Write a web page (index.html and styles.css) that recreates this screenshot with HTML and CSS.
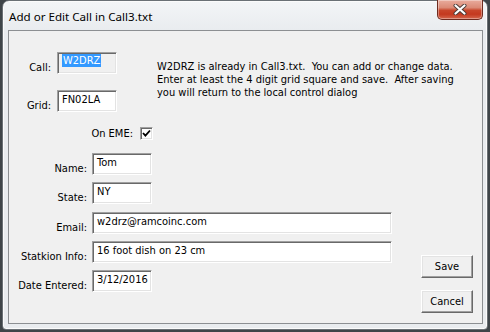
FILE: index.html
```html
<!DOCTYPE html>
<html>
<head>
<meta charset="utf-8">
<link rel="stylesheet" href="styles.css">
</head>
<body>
<div class="window">
  <div class="titlebar">
    <span class="title">Add or Edit Call in Call3.txt</span>
    <div class="close">
      <svg width="14" height="11" viewBox="0 0 14 11"><path d="M2.5 1.5 L11.5 9.5 M11.5 1.5 L2.5 9.5" stroke="#4a3a36" stroke-width="4" stroke-linecap="round"/><path d="M2.5 1.5 L11.5 9.5 M11.5 1.5 L2.5 9.5" stroke="#ffffff" stroke-width="2.2" stroke-linecap="round"/></svg>
    </div>
  </div>
  <div class="client">
    <div class="form">
      <div class="top">
        <div class="top-fields">
          <div class="row"><span class="lbl lbl-s">Call:</span><div class="tb tb-s disabled"><span class="sel">W2DRZ</span></div></div>
          <div class="row row-grid"><span class="lbl lbl-s">Grid:</span><div class="tb tb-s">FN02LA</div></div>
        </div>
        <p class="note">W2DRZ is already in Call3.txt.&nbsp; You can add or change data.<br>Enter at least the 4 digit grid square and save.&nbsp; After saving<br>you will return to the local control dialog</p>
      </div>
      <div class="eme"><span class="lbl lbl-eme">On EME:</span><span class="check"><svg width="9" height="9" viewBox="0 0 9 9"><path d="M1 4 L3.4 6.6 L8 1.5" fill="none" stroke="#000" stroke-width="1.8"/></svg></span></div>
      <div class="row row-l first"><span class="lbl">Name:</span><div class="tb tb-s">Tom</div></div>
      <div class="row row-l"><span class="lbl">State:</span><div class="tb tb-s">NY</div></div>
      <div class="row row-l"><span class="lbl">Email:</span><div class="tb tb-w">w2drz@ramcoinc.com</div></div>
      <div class="row row-l"><span class="lbl">Statkion Info:</span><div class="tb tb-w">16 foot dish on 23 cm</div></div>
      <div class="row row-l"><span class="lbl">Date Entered:</span><div class="tb tb-s">3/12/2016</div></div>
    </div>
    <div class="buttons">
      <button class="btn">Save</button>
      <button class="btn">Cancel</button>
    </div>
  </div>
</div>
</body>
</html>
```

FILE: styles.css
```css
html, body {
  margin: 0;
  padding: 0;
}
body {
  background: #3f4549;
  width: 490px;
  height: 332px;
  overflow: hidden;
  font-family: "DejaVu Sans Condensed", "Liberation Sans", sans-serif;
  font-size: 11px;
  color: #000;
}
.window {
  margin-left: 2px;
  width: 486px;
  height: 330px;
  box-sizing: border-box;
  border: 1px solid #6a7075;
  border-radius: 7px 7px 4px 4px;
  background: linear-gradient(to bottom, #f3f5f7 0, #e9ecef 29px, #e9ecef 100%);
  box-shadow: inset 0 0 0 1px #fbfbfb;
  padding: 0 4px 5px 5px;
  display: flex;
  flex-direction: column;
}
.titlebar {
  height: 29px;
  display: flex;
  align-items: flex-start;
  justify-content: space-between;
}
.title {
  font-family: "Noto Sans", "Open Sans", sans-serif;
  font-size: 11.6px;
  line-height: 16px;
  padding: 8px 0 0 1px;
  color: #000;
}
.close {
  margin-top: -1px;
  width: 46px;
  height: 20px;
  box-sizing: border-box;
  border: 1px solid #6e2b1f;
  border-top: none;
  border-radius: 0 0 5px 5px;
  background: linear-gradient(to bottom, #e9ac9d 0%, #db8a76 40%, #c8452a 55%, #c4391f 75%, #d4664c 100%);
  box-shadow: inset 0 0 0 1px rgba(255,255,255,0.35);
  display: flex;
  align-items: center;
  justify-content: center;
}
.client {
  flex: 1;
  min-height: 0;
  border: 1px solid #8c8f92;
  background: #f0f0f0;
  display: flex;
}
.form {
  flex: 1;
  min-width: 0;
  padding-top: 21px;
  display: flex;
  flex-direction: column;
}
.top {
  display: flex;
}
.top-fields {
  display: flex;
  flex-direction: column;
  flex-shrink: 0;
}
.row {
  display: flex;
  align-items: flex-end;
}
.row-grid {
  margin-top: 16px;
}
.lbl {
  flex-shrink: 0;
  line-height: 13px;
  text-align: right;
  width: 78px;
  margin-right: 5px;
  white-space: nowrap;
}
.lbl-s {
  width: 42px;
  margin-right: 6px;
}
.tb {
  flex-shrink: 0;
  height: 22px;
  box-sizing: border-box;
  background: #fff;
  border-style: solid;
  border-width: 1px;
  border-color: #a0a0a0 #ffffff #ffffff #a0a0a0;
  box-shadow: inset 1px 1px 0 #696969, inset -1px -1px 0 #e3e3e3;
  padding: 2px 3px 0 4px;
  line-height: 13px;
  white-space: nowrap;
  overflow: hidden;
}
.tb-s {
  width: 60px;
}
.tb-w {
  width: 300px;
}
.disabled {
  background: #f0f0f0;
  padding-top: 1px;
}
.sel {
  background: #3399ff;
  color: #fff;
  padding: 0 1px;
}
.note {
  flex-shrink: 0;
  margin: 8px 0 0 40px;
  line-height: 13px;
  white-space: nowrap;
}
.eme {
  margin-top: 15px;
  display: flex;
  align-items: flex-end;
}
.lbl-eme {
  width: 124px;
  margin-right: 7px;
}
.check {
  flex-shrink: 0;
  width: 13px;
  height: 13px;
  box-sizing: border-box;
  background: #fff;
  border-style: solid;
  border-width: 1px;
  border-color: #a0a0a0 #ffffff #ffffff #a0a0a0;
  box-shadow: inset 1px 1px 0 #696969, inset -1px -1px 0 #e3e3e3;
  display: flex;
  align-items: center;
  justify-content: center;
}
.row-l {
  margin-top: 7.25px;
}
.row-l.first {
  margin-top: 13px;
}
.buttons {
  flex-shrink: 0;
  display: flex;
  flex-direction: column;
  justify-content: flex-end;
  gap: 12px;
  padding: 0 9px 10px 0;
}
.btn {
  width: 52px;
  height: 23px;
  box-sizing: border-box;
  margin: 0;
  padding: 0;
  font-family: inherit;
  font-size: 11px;
  color: #000;
  background: #f0f0f0;
  border-style: solid;
  border-width: 1px;
  border-color: #ffffff #696969 #696969 #ffffff;
  box-shadow: inset -1px -1px 0 #a0a0a0, inset 1px 1px 0 #e3e3e3;
}
```
